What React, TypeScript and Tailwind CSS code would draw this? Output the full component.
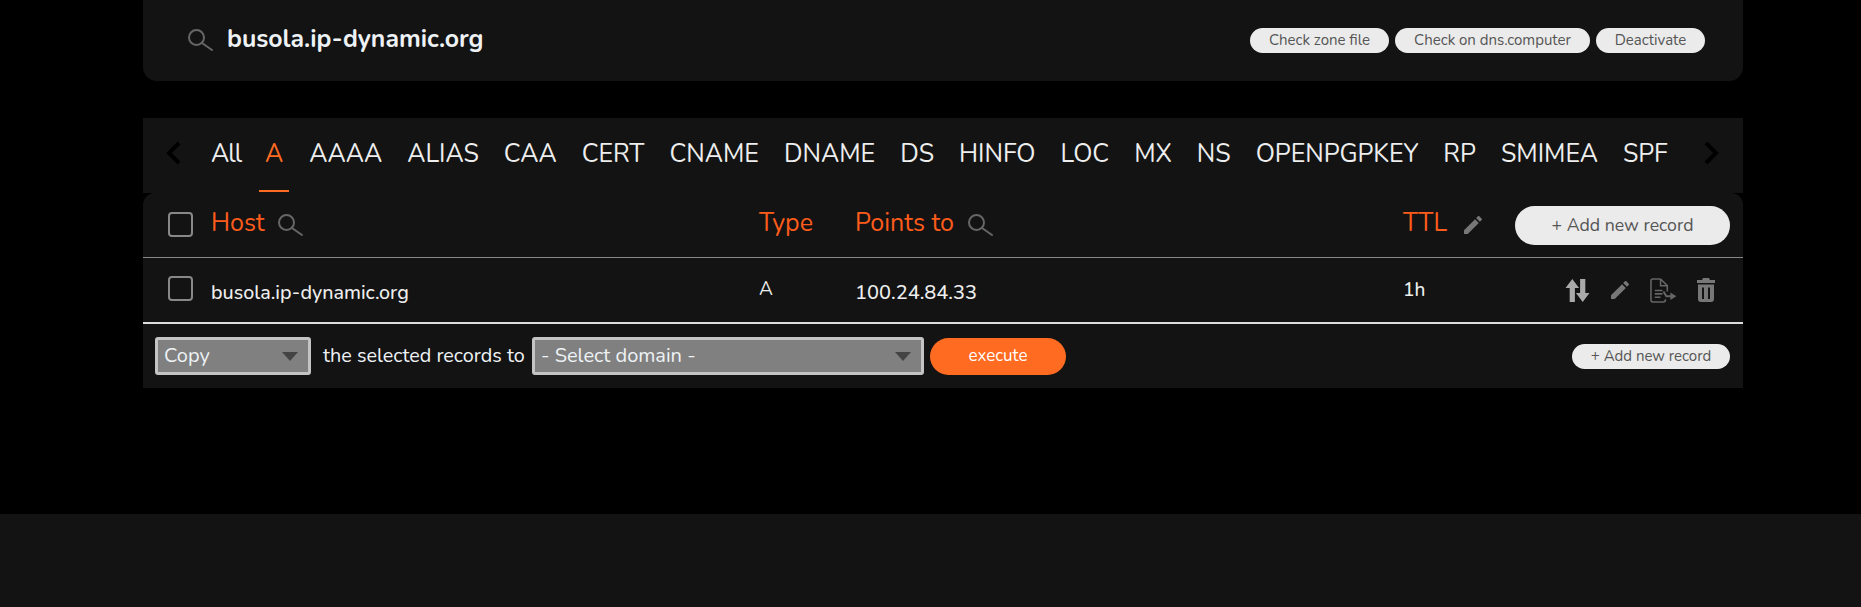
import { MdEdit } from "react-icons/md"

const tabs = ["All", "A", "AAAA", "ALIAS", "CAA", "CERT", "CNAME", "DNAME", "DS", "HINFO", "LOC", "MX", "NS", "OPENPGPKEY", "RP", "SMIMEA", "SPF"]

function SearchIcon({ className }: { className: string }) {
  return (
    <svg viewBox="0 0 26 24" fill="none" stroke="#666" strokeWidth="2" className={className}>
      <circle cx="9.5" cy="9.5" r="7.5" />
      <path d="M15 15l10 7" strokeLinecap="round" />
    </svg>
  )
}

function Chevron({ right }: { right?: boolean }) {
  return (
    <svg viewBox="0 0 16 24" fill="none" stroke="#000" strokeWidth="4" className="w-[16px] h-[24px]">
      <path d={right ? "M3 2l10 10L3 22" : "M13 2L3 12l10 10"} />
    </svg>
  )
}

function Check() {
  return <div className="w-[25px] h-[25px] rounded-[4px] border-2 border-[#888] shrink-0" />
}

function Caret({ color }: { color: string }) {
  return (
    <svg viewBox="0 0 16 9" className="w-[16px] h-[9px]" fill={color}>
      <path d="M0 0h16L8 9z" />
    </svg>
  )
}

export default function App() {
  return (
    <div className="min-h-[607px] bg-black flex flex-col font-['Nunito','Noto_Sans',sans-serif] text-[#eee]">
      <div className="ml-[143px] w-[1600px] flex-1">
        <div className="h-[81px] bg-[#131313] rounded-b-[14px] flex items-center pl-[44px] pr-[38px]">
          <SearchIcon className="w-[26px] h-[24px] mb-[2px]" />
          <span className="ml-[14px] text-[24.8px] font-bold text-[#eef2f5] mb-[2px]">busola.ip-dynamic.org</span>
          <div className="ml-auto flex gap-[6px]">
            <button className="h-[25px] w-[139px] rounded-full bg-[#ebebeb] text-[#555] text-[15px]">Check zone file</button>
            <button className="h-[25px] w-[195px] rounded-full bg-[#ebebeb] text-[#555] text-[15px]">Check on dns.computer</button>
            <button className="h-[25px] w-[109px] rounded-full bg-[#ebebeb] text-[#555] text-[15px]">Deactivate</button>
          </div>
        </div>

        <div className="mt-[37px] h-[75px] bg-[#131313] flex items-center pl-[23px] relative">
          <div className="mb-[6px]">
            <Chevron />
          </div>
          <div className="ml-[29px] flex gap-[25px] text-[25px] text-[#eee] mb-[2px]">
            {tabs.map((t) => (
              <span key={t} className={t === "All" ? "tracking-[-1px]" : t === "A" ? "text-[#ff6b21] relative -ml-[1px] mr-[1px]" : ""}>
                {t}
                {t === "A" && <span className="absolute left-[-6px] right-[-6px] top-[54px] h-[2px] bg-[#ff6b21]" />}
              </span>
            ))}
          </div>
          <div className="ml-auto mr-[24px] mb-[6px]">
            <Chevron right />
          </div>
        </div>

        <div className="bg-[#131313] rounded-t-[12px]">
          <div className="h-[65px] flex items-center pl-[25px] pr-[13px] border-b border-[#888] text-[#ff5c1c] text-[25px]">
            <div className="mb-[2px]">
              <Check />
            </div>
            <div className="ml-[18px] w-[548px] flex items-center gap-[12px] mb-[3px]">
              <span>Host</span>
              <SearchIcon className="w-[26px] h-[24px] mt-[3px]" />
            </div>
            <span className="w-[96px] mb-[3px]">Type</span>
            <div className="w-[548px] flex items-center gap-[13px] mb-[3px]">
              <span>Points to</span>
              <SearchIcon className="w-[26px] h-[24px] mt-[3px]" />
            </div>
            <span className="mb-[3px]">TTL</span>
            <MdEdit className="ml-[14px] w-[24px] h-[24px] text-[#777]" />
            <button className="ml-auto h-[39px] w-[215px] rounded-full bg-[#ebebeb] text-[#555] text-[17.7px]">+ Add new record</button>
          </div>

          <div className="h-[64px] flex items-center pl-[25px] pr-[28px] rounded-b-[12px] text-[#eee]">
            <div className="mb-[4px]">
              <Check />
            </div>
            <span className="ml-[18px] w-[548px] text-[19.7px] font-medium mt-[5px]">busola.ip-dynamic.org</span>
            <span className="w-[96px] text-[19px] mb-[2px]">A</span>
            <span className="w-[548px] text-[20px] font-medium mt-[5px]">100.24.84.33</span>
            <span className="text-[19px] font-medium">1h</span>
            <div className="ml-auto flex items-center text-[#777]">
              <svg viewBox="0 0 24 24" fill="#aaa" className="w-[25px] h-[25px] mr-[18px]">
                <path d="M7 1l6.500 8.500H9.500V23h-5V9.500H.5zM14.500 1h5v13.500h4L17 23l-6.500-8.500h4z" />
              </svg>
              <MdEdit className="w-[24px] h-[24px] mr-[17px]" />
              <svg viewBox="0 0 28 26" fill="none" stroke="#666" strokeWidth="1.6" className="w-[27px] h-[25px] mr-[21px]">
                <path d="M12 1H4a2 2 0 0 0-2 2v20a2 2 0 0 0 2 2h11a2 2 0 0 0 2-2v-1M12 1l7 7v6M12 1v7h7M6 13h8M6 16.500h8M6 20h6" />
                <path d="M15 14l3 5h7" strokeWidth="2" />
                <path d="M23 16.500l4 2.500-4 2.500z" fill="#666" />
              </svg>
              <svg viewBox="0 0 18 24" className="w-[18px] h-[24px]">
                <path fill="#777" d="M6 0h6l1 2h5v3H0V2h5zM1 6.500h16V21a3 3 0 0 1-3 3H4a3 3 0 0 1-3-3z" />
                <path fill="#131313" d="M5 9.500h2V21H5zM11 9.500h2V21h-2z" />
              </svg>
            </div>
          </div>
        </div>

        <div className="h-[66px] bg-[#131313] border-t-2 border-[#ddd] flex items-center pl-[12px] pr-[13px]">
          <div className="h-[38px] w-[156px] bg-[#808080] border-[3px] border-[#c4c4c4] rounded-[3px] flex items-center justify-between pl-[6px] pr-[10px] text-[20px] text-[#eef2f5]">
            <span>Copy</span>
            <Caret color="#444" />
          </div>
          <span className="ml-[12px] w-[209px] text-[19.8px] text-[#eef2f5] whitespace-nowrap">the selected records to</span>
          <div className="h-[38px] w-[392px] bg-[#808080] border-[3px] border-[#c4c4c4] rounded-[3px] flex items-center justify-between pl-[6px] pr-[10px] text-[20px] text-[#eef2f5]">
            <span>- Select domain -</span>
            <Caret color="#444" />
          </div>
          <button className="ml-[6px] h-[37px] w-[136px] rounded-full bg-[#ff6b21] text-white text-[17px]">execute</button>
          <button className="ml-auto h-[25px] w-[158px] rounded-full bg-[#ebebeb] text-[#555] text-[15px]">+ Add new record</button>
        </div>
      </div>
      <div className="h-[93px] bg-[#131313]" />
    </div>
  )
}
